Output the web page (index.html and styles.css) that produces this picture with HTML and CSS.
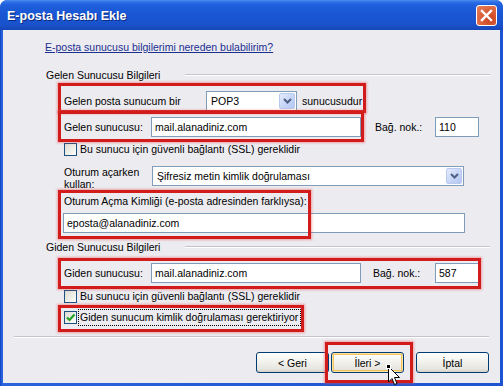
FILE: index.html
```html
<!DOCTYPE html>
<html lang="tr">
<head>
<meta charset="utf-8">
<title>E-posta Hesabı Ekle</title>
<link rel="stylesheet" href="styles.css">
</head>
<body>
<div class="window">
  <div class="titlebar">
    <span class="title">E-posta Hesabı Ekle</span>
    <span class="close"><svg width="13" height="13" viewBox="0 0 13 13"><path d="M2 2 L11 11 M11 2 L2 11" stroke="#fff" stroke-width="2.4" stroke-linecap="square"/></svg></span>
  </div>
  <div class="client">
    <div class="linkrow"><a class="link" href="#">E-posta sunucusu bilgilerimi nereden bulabilirim?</a></div>

    <div class="group"><span class="glabel">Gelen Sunucusu Bilgileri</span><span class="rule"></span></div>

    <div class="row r1">
      <span class="lbl lbl-wide">Gelen posta sunucum bir</span>
      <div class="select sel-pop"><span class="seltext">POP3</span><span class="dd"><svg width="9" height="6" viewBox="0 0 9 6"><path d="M1 1 L4.5 4.5 L8 1" fill="none" stroke="#4d6185" stroke-width="2"/></svg></span></div>
      <span class="after">sunucusudur</span>
    </div>

    <div class="row r2">
      <span class="lbl">Gelen sunucusu:</span>
      <div class="input inp-server">mail.alanadiniz.com</div>
      <span class="port-lbl">Bağ. nok.:</span>
      <div class="input inp-port">110</div>
    </div>

    <div class="cbrow cb1">
      <span class="cb"></span><span class="cbtext">Bu sunucu için güvenli bağlantı (SSL) gereklidir</span>
    </div>

    <div class="row oturum">
      <span class="lbl lbl-two">Oturum açarken<br>kullan:</span>
      <div class="select sel-auth"><span class="seltext">Şifresiz metin kimlik doğrulaması</span><span class="dd"><svg width="9" height="6" viewBox="0 0 9 6"><path d="M1 1 L4.5 4.5 L8 1" fill="none" stroke="#4d6185" stroke-width="2"/></svg></span></div>
    </div>

    <div class="kimlik-lbl">Oturum Açma Kimliği (e-posta adresinden farklıysa):</div>
    <div class="input inp-kimlik">eposta@alanadiniz.com</div>

    <div class="group group2"><span class="glabel">Giden Sunucusu Bilgileri</span><span class="rule"></span></div>

    <div class="row r3">
      <span class="lbl">Giden sunucusu:</span>
      <div class="input inp-server">mail.alanadiniz.com</div>
      <span class="port-lbl port-lbl2">Bağ. nok.:</span>
      <div class="input inp-port">587</div>
    </div>

    <div class="cbrow cb2">
      <span class="cb"></span><span class="cbtext">Bu sunucu için güvenli bağlantı (SSL) gereklidir</span>
    </div>
    <div class="cbrow cb3">
      <span class="cb checked"><svg width="11" height="11" viewBox="0 0 11 11"><path d="M2 5.5 L4.5 8 L9.5 2.5" fill="none" stroke="#21a121" stroke-width="2.2"/></svg></span><span class="cbtext focus">Giden sunucum kimlik doğrulaması gerektiriyor</span>
    </div>

    <div class="sep"></div>

    <div class="buttons">
      <span class="btn">&lt; Geri</span>
      <span class="btn btn-hot">İleri &gt;</span>
      <span class="btn btn-cancel">İptal</span>
    </div>
  </div>

  <div class="mark m1"></div>
  <div class="mark m2"></div>
  <div class="mark m3"></div>
  <div class="mark m4"></div>
  <div class="mark m5"></div>
  <div class="mark m6"></div>

  <div class="cursor">
    <span class="cur-sq"></span>
    <svg width="13" height="20" viewBox="0 0 13 20"><path d="M0.5 0.5 L0.5 16 L4 12.5 L6.5 18.5 L9 17.5 L6.5 11.5 L11.5 11.5 Z" fill="#fff" stroke="#000" stroke-width="1"/></svg>
  </div>
</div>
</body>
</html>
```
FILE: styles.css
```css
html, body {
  margin: 0;
  padding: 0;
}
body {
  width: 503px;
  height: 386px;
  overflow: hidden;
  background: #ffffff;
  font-family: "Liberation Sans", Arial, sans-serif;
  font-size: 10.5px;
  color: #000;
}
.window {
  position: relative;
  width: 503px;
  height: 386px;
  display: flex;
  flex-direction: column;
  background: linear-gradient(90deg, #0a3bb8 0, #1f5ad8 1px, #2a62dc 2px, #1d52d0 100%);
  border-radius: 7px 7px 0 0;
  overflow: hidden;
}
.titlebar {
  flex: none;
  height: 30px;
  display: flex;
  align-items: center;
  padding: 0 6px 0 7px;
  background: linear-gradient(#4d8ff0 0, #2f6fe6 2px, #1e5fdc 5px, #1a57d4 45%, #1a52cc 80%, #1747b8 100%);
  border-radius: 7px 7px 0 0;
}
.title {
  flex: 1;
  color: #fff;
  font-weight: bold;
  font-size: 12.5px;
  padding-top: 1px;
  text-shadow: 1px 1px 0 #0b2a7a;
}
.close {
  width: 19px;
  height: 19px;
  margin-top: 1px;
  border: 1px solid #fff;
  border-radius: 3px;
  display: flex;
  align-items: center;
  justify-content: center;
  background: radial-gradient(circle at 70% 70%, #c8431e 0, #d85b36 40%, #e8825e 100%);
}
.client {
  flex: 1;
  margin: 0 3px 3px;
  padding: 0 11px;
  background: #ecebf0;
  display: flex;
  flex-direction: column;
}
.linkrow {
  margin-top: 8px;
  height: 18px;
  display: flex;
  align-items: center;
  padding-left: 31px;
}
.link {
  color: #1b2f8f;
  text-decoration: underline;
}
.group {
  margin-top: 11px;
  height: 16px;
  display: flex;
  align-items: center;
  padding-left: 32px;
}
.group2 {
  margin-top: 6px;
}
.glabel {
  width: 139px;
  flex: none;
}
.rule {
  flex: 1;
  height: 1px;
  background: #c5c4cc;
  border-bottom: 1px solid #fff;
  margin-right: -1px;
}
.row {
  display: flex;
  align-items: center;
  padding-left: 50px;
  height: 20px;
}
.r1 { margin-top: 8px; }
.r2 { margin-top: 6px; }
.r3 { margin-top: 8px; }
.lbl {
  width: 87px;
  flex: none;
}
.lbl-wide {
  width: 142px;
}
.input {
  box-sizing: border-box;
  height: 20px;
  border: 1px solid #7f9db9;
  background: #fff;
  display: flex;
  align-items: center;
  padding-left: 3px;
  flex: none;
}
.inp-server {
  width: 210px;
}
.port-lbl {
  margin-left: 14px;
  width: 60px;
  flex: none;
}
.port-lbl2 {
  margin-left: 12px;
  width: 62px;
}
.inp-port {
  width: 44px;
  margin-top: -1px;
}
.select {
  box-sizing: border-box;
  height: 20px;
  border: 1px solid #7f9db9;
  background: #fff;
  display: flex;
  align-items: center;
  padding: 1px;
  flex: none;
}
.seltext {
  flex: 1;
  padding-left: 3px;
}
.dd {
  width: 16px;
  height: 16px;
  box-sizing: border-box;
  border: 1px solid #b9c9ef;
  border-radius: 2px;
  background: linear-gradient(135deg, #e4ecfc 0, #c7d6f7 55%, #b3c7f2 100%);
  display: flex;
  align-items: center;
  justify-content: center;
}
.sel-pop {
  width: 91px;
}
.after {
  margin-left: 5px;
}
.cbrow {
  display: flex;
  align-items: center;
  padding-left: 50px;
  height: 13px;
}
.cb1 { margin-top: 6px; }
.cb2 { margin-top: 7px; }
.cb3 { margin-top: 8px; }
.cb {
  box-sizing: border-box;
  width: 13px;
  height: 13px;
  flex: none;
  border: 1px solid #1c5180;
  background: linear-gradient(135deg, #dcdcd4 0, #f0f0ea 60%, #ffffff 100%);
  display: flex;
  align-items: center;
  justify-content: center;
}
.cbtext {
  margin-left: 3px;
  line-height: 13px;
}
.focus {
  outline: 1px dotted #000;
  outline-offset: 1px;
  padding-right: 1px;
}
.oturum {
  margin-top: 10px;
  height: 24px;
  align-items: flex-start;
}
.lbl-two {
  width: 88px;
  line-height: 12px;
}
.sel-auth {
  width: 312px;
}
.kimlik-lbl {
  margin-top: 4px;
  height: 14px;
  line-height: 14px;
  padding-left: 50px;
}
.inp-kimlik {
  margin-top: 5px;
  margin-left: 49px;
  width: 402px;
}
.sep {
  margin-top: 12px;
  height: 1px;
  background: #c5c4cc;
  border-bottom: 1px solid #fff;
}
.buttons {
  margin-top: 14px;
  display: flex;
  justify-content: flex-end;
}
.btn {
  box-sizing: border-box;
  width: 73px;
  height: 21px;
  border: 1px solid #003c74;
  border-radius: 3px;
  background: linear-gradient(#ffffff 0, #f4f4f0 40%, #e6e5df 85%, #d6d0c5 100%);
  display: flex;
  align-items: center;
  justify-content: center;
  margin-left: 2px;
}
.btn-hot {
  box-shadow: inset 0 0 0 1px #fce4a0, inset 0 0 0 2px #f5c25c;
}
.btn-cancel {
  margin-left: 12px;
}
.mark {
  position: absolute;
  box-sizing: border-box;
  border: 3px solid #d21b1b;
  box-shadow: 0 0 2px 1px rgba(230, 80, 80, 0.45);
}
.m1 { left: 58px; top: 83px; width: 308px; height: 30px; }
.m2 { left: 58px; top: 111px; width: 306px; height: 31px; }
.m3 { left: 58px; top: 190px; width: 253px; height: 49px; }
.m4 { left: 58px; top: 258px; width: 423px; height: 31px; }
.m5 { left: 58px; top: 305px; width: 246px; height: 27px; }
.m6 { left: 325px; top: 342px; width: 88px; height: 41px; }
.cursor {
  position: absolute;
  left: 388px;
  top: 366px;
  width: 13px;
  height: 20px;
}
.cursor svg {
  display: block;
}
.cur-sq {
  position: absolute;
  left: -2px;
  top: -2px;
  width: 3px;
  height: 3px;
  background: #000;
  border: 1px solid #fff;
  z-index: 1;
}
```
